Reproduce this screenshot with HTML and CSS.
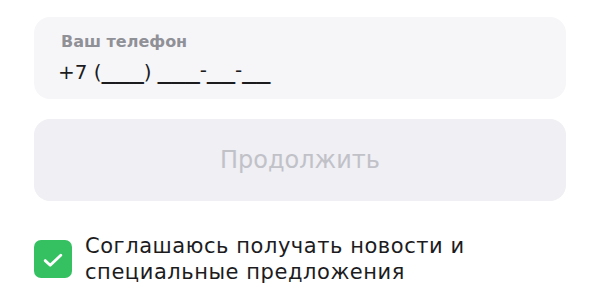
FILE: index.html
```html
<!DOCTYPE html>
<html lang="ru">
<head>
	<meta charset="utf-8">
	<title>Телефон</title>
	<link rel="stylesheet" href="styles.css">
</head>
<body>
	<div class="form">
		<label class="field">
			<span class="field-label">Ваш телефон</span>
			<span class="field-value">+7 (<span class="mask">___</span>) <span class="mask">___</span><span class="dash">-</span><span class="mask">__</span><span class="dash">-</span><span class="mask">__</span></span>
		</label>

		<button class="submit-btn" type="button" disabled>Продолжить</button>

		<div class="agree">
			<span class="check">
				<svg width="38" height="38" viewBox="0 0 38 38"><path d="M11.2 20.6l5 4.6 10.6-10" fill="none" stroke="#fff" stroke-width="2.8" stroke-linecap="round" stroke-linejoin="round"/></svg>
			</span>
			<span class="agree-text">Соглашаюсь получать новости и<br>специальные предложения</span>
		</div>
	</div>
</body>
</html>
```

FILE: styles.css
```css
*{
	margin: 0;
	padding: 0;
	box-sizing: border-box;
}

body{
	background: #fff;
	font-family: "DejaVu Sans", Inter, sans-serif;
	color: #1c1c1e;
}

.form{
	width: 532px;
	margin: 17px 0 0 34px;
	display: flex;
	flex-direction: column;
}

.field{
	height: 82px;
	background: #f6f6f9;
	border-radius: 16px;
	padding: 14.5px 26px 0 27px;
	display: flex;
	flex-direction: column;
}
.field-label{
	font-size: 16px;
	font-weight: 600;
	color: #909097;
	line-height: 20px;
}
.field-value{
	font-size: 20px;
	line-height: 26px;
	margin-top: 5.5px;
	margin-left: -3px;
	white-space: nowrap;
}
.field-value .mask{
	font-size: 28px;
	line-height: 26px;
	position: relative;
	top: -2px;
}
.field-value .dash{
	position: relative;
	top: -2px;
}

.submit-btn{
	margin-top: 20px;
	height: 82px;
	border: none;
	border-radius: 16px;
	background: #efeff4;
	color: #c1c1c8;
	font-family: inherit;
	font-size: 24px;
}

.agree{
	margin-top: 31.5px;
	display: flex;
	align-items: center;
	gap: 13px;
}
.check{
	width: 38px;
	height: 38px;
	flex: none;
	border-radius: 7px;
	background: #35c161;
	display: flex;
}
.agree-text{
	font-size: 21px;
	line-height: 26px;
	letter-spacing: 0.55px;
}
```
